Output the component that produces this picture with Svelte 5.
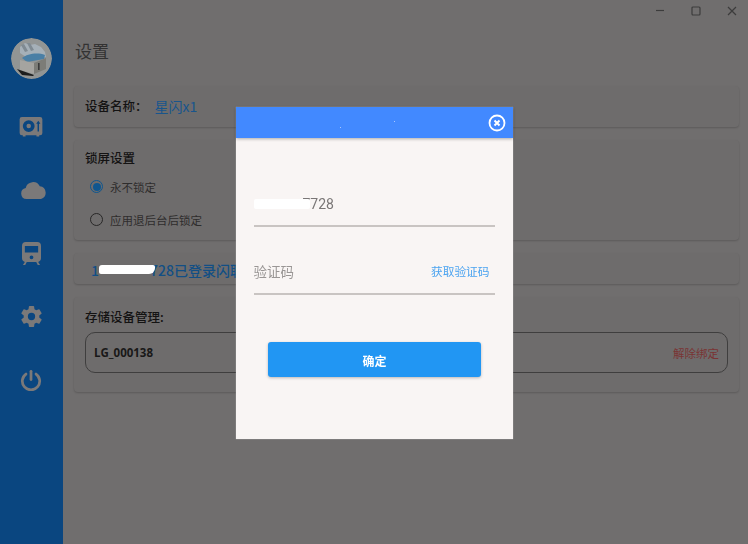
<script>
  let code = '';
  const navItems = ['disk', 'cloud', 'train', 'gear', 'power'];
</script>

<div class="window">
  <aside class="sidebar">
    <div class="avatar">
      <svg viewBox="0 0 41 41" width="41" height="41">
        <circle cx="20.500" cy="20.500" r="20.500" fill="#929594" />
        <path d="M9 9l5-4 5 2 5-1 6 3 4 5 1 5-17 2-9-6z" fill="#a5b0b8" />
        <path d="M10 7l3-1 4 7-3 1zM16 5l3 0 4 7-3 1z" fill="#7f8a92" />
        <path d="M11 20c5-4 15-6 23-3l-1 4-17 3z" fill="#4a7fa5" />
        <path d="M9 22l14 3v11l-14-4z" fill="#a5a4a0" />
        <path d="M23 25l12-5v11l-12 5z" fill="#7c7c77" />
        <path d="M6 31l17 6-1 1-11-1z" fill="#1d1d1d" />
        <rect x="27" y="25" width="1.600" height="7" fill="#3a3a3a" />
      </svg>
    </div>
    <nav class="nav">
      {#each navItems as item}
        <div class="nav-item">
          {#if item === 'disk'}
            <svg viewBox="0 0 26 22" width="24" height="20" fill="#7b7979">
              <path fill-rule="evenodd" d="M3 0h20a2.500 2.500 0 0 1 2.500 2.500v15A2.500 2.500 0 0 1 23 20h-1v1.500h-3V20H7v1.500H4V20H3a2.500 2.500 0 0 1-2.500-2.500v-15A2.500 2.500 0 0 1 3 0zm7.500 3.500a6.500 6.500 0 1 0 0 13 6.500 6.500 0 0 0 0-13zm0 4a2.500 2.500 0 1 1 0 5 2.500 2.500 0 0 1 0-5zM21 4l-2.300 3.500h1.500V16h1.600V7.500h1.500z" />
            </svg>
          {:else if item === 'cloud'}
            <svg class="cloud" viewBox="0 0 26 18" width="26" height="18" fill="#7b7979">
              <path d="M5.500 18A5.500 5.500 0 0 1 4.700 7.100 7.500 7.500 0 0 1 18.800 5.300 6.500 6.500 0 0 1 20 18z" />
            </svg>
          {:else if item === 'train'}
            <svg viewBox="0 0 20 24" width="19" height="23" fill="#7b7979">
              <path fill-rule="evenodd" d="M4 0h12a4 4 0 0 1 4 4v13a4 4 0 0 1-3 3.900l2 3.100h-2.400L15 21H5l-1.600 3H1l2-3.100A4 4 0 0 1 0 17V4a4 4 0 0 1 4-4zM3 4v7h14V4zm7 10a2 2 0 1 0 0 4 2 2 0 0 0 0-4z" />
            </svg>
          {:else if item === 'gear'}
            <svg viewBox="0 0 24 24" width="25" height="25" fill="#7b7979">
              <path d="M19.430 12.980a7.800 7.800 0 0 0 0-1.960l2.110-1.650a.5.500 0 0 0 .12-.64l-2-3.460a.5.500 0 0 0-.61-.22l-2.490 1a7.300 7.300 0 0 0-1.690-.98l-.38-2.650A.49.490 0 0 0 14 2h-4a.49.490 0 0 0-.49.420l-.38 2.650c-.61.25-1.170.59-1.690.98l-2.490-1a.49.490 0 0 0-.61.22l-2 3.460a.49.490 0 0 0 .12.640l2.110 1.650a7.900 7.900 0 0 0 0 1.960l-2.110 1.650a.5.500 0 0 0-.12.640l2 3.460c.12.220.39.300.61.220l2.490-1c.52.400 1.080.73 1.690.98l.38 2.650c.03.240.24.420.49.420h4c.25 0 .46-.18.49-.42l.38-2.650a7.700 7.700 0 0 0 1.690-.98l2.490 1c.23.090.49 0 .61-.22l2-3.460a.5.500 0 0 0-.12-.64zM12 15.500a3.500 3.500 0 1 1 0-7 3.500 3.500 0 0 1 0 7z" />
            </svg>
          {:else}
            <svg viewBox="0 0 24 24" width="22" height="22" fill="none" stroke="#7b7979" stroke-width="3" stroke-linecap="round">
              <path d="M12 2.500v9" />
              <path d="M6.500 5.500a9.500 9.500 0 1 0 11 0" />
            </svg>
          {/if}
        </div>
      {/each}
    </nav>
  </aside>

  <main class="content">
    <div class="titlebar">
      <svg viewBox="0 0 10 10" width="10" height="10" stroke="#3c3c3c" fill="none"><path d="M1 4.500h8" stroke-width="1.200" /></svg>
      <svg viewBox="0 0 10 10" width="10" height="10" stroke="#3c3c3c" fill="none"><rect x="1" y="1" width="8" height="8" rx="1" stroke-width="1.200" /></svg>
      <svg viewBox="0 0 10 10" width="10" height="10" stroke="#3c3c3c" fill="none"><path d="M1 1l8 8M9 1l-8 8" stroke-width="1.200" /></svg>
    </div>
    <h1 class="page-title">设置</h1>

    <section class="card name-card">
      <span class="label">设备名称：</span>
      <span class="device-name">星闪x1</span>
    </section>

    <section class="card lock-card">
      <div class="label">锁屏设置</div>
      <label class="radio-row">
        <span class="radio checked"></span>永不锁定
      </label>
      <label class="radio-row">
        <span class="radio"></span>应用退后台后锁定
      </label>
    </section>

    <section class="card login-card">
      1<span class="redact redact-login"></span>728已登录闪联
    </section>

    <section class="card storage-card">
      <div class="label">存储设备管理:</div>
      <div class="device-row">
        <span class="device-id">LG_000138</span>
        <span class="unbind">解除绑定</span>
      </div>
    </section>
  </main>

  <div class="scrim">
    <div class="dialog">
      <header class="dialog-head">
        <i class="speck speck-a"></i>
        <i class="speck speck-b"></i>
        <svg class="close" viewBox="0 0 18 18" width="18" height="18" fill="none" stroke="#fff">
          <circle cx="9" cy="9" r="7.500" stroke-width="1.800" />
          <path d="M6.500 6.500l5 5M11.500 6.500l-5 5" stroke-width="2" />
        </svg>
      </header>
      <div class="dialog-body">
        <div class="field phone">
          <span class="redact redact-phone"></span>7728
        </div>
        <div class="field code">
          <input class="code-input" placeholder="验证码" bind:value={code} />
          <span class="get-code">获取验证码</span>
        </div>
        <button class="confirm">确定</button>
      </div>
    </div>
  </div>
</div>

<style>
  :global(body) {
    margin: 0;
    background: #706e6e;
  }

  .window {
    display: flex;
    height: 544px;
    overflow: hidden;
    font-family: "Noto Sans CJK SC", "Noto Sans", sans-serif;
    font-size: 12px;
    color: #191818;
  }

  .sidebar {
    width: 63px;
    flex: none;
    background: #0a4680;
    display: flex;
    flex-direction: column;
    align-items: center;
    padding: 38px 1px 0 0;
    box-sizing: border-box;
  }

  .avatar {
    width: 41px;
    height: 41px;
    border-radius: 50%;
    overflow: hidden;
  }

  .nav {
    margin-top: 16px;
    display: flex;
    flex-direction: column;
    align-self: stretch;
  }

  .nav-item {
    height: 63.250px;
    display: flex;
    align-items: center;
    justify-content: center;
  }

  .cloud {
    margin-left: 5px;
  }

  .content {
    flex: 1;
    padding: 0 9px 0 11px;
    min-width: 0;
    background: #706e6e;
  }

  .titlebar {
    height: 22px;
    display: flex;
    justify-content: flex-end;
    align-items: center;
    gap: 26px;
    padding-right: 2px;
  }

  .page-title {
    margin: 16px 0 0 1px;
    font-size: 17px;
    font-weight: 400;
    line-height: 26px;
    height: 48px;
    color: #333232;
  }

  .card {
    background: #6e6c6c;
    border-radius: 4px;
    box-shadow: 0 1px 2px rgba(0, 0, 0, 0.18);
    box-sizing: border-box;
    margin-bottom: 13px;
    padding: 0 11px;
  }

  .label {
    font-size: 12.500px;
    font-weight: 500;
    color: #141313;
  }

  .name-card {
    height: 41px;
    padding-bottom: 2px;
    display: flex;
    align-items: center;
    gap: 1px;
  }

  .device-name {
    font-size: 14px;
    color: #18558c;
    margin-left: 6px;
  }

  .lock-card {
    height: 100px;
    padding-top: 8px;
  }

  .radio-row {
    display: flex;
    align-items: center;
    gap: 7px;
    height: 33px;
    padding-left: 5px;
    font-size: 11.500px;
    color: #2e2d2d;
  }

  .lock-card .radio-row:first-of-type {
    margin-top: 3px;
  }

  .radio {
    width: 11px;
    height: 11px;
    border: 1.500px solid #282727;
    border-radius: 50%;
    position: relative;
  }

  .radio.checked {
    border-color: #0f568f;
  }

  .radio.checked::after {
    content: "";
    position: absolute;
    inset: 1.500px;
    border-radius: 50%;
    background: #0f568f;
  }

  .login-card {
    height: 31px;
    display: flex;
    align-items: center;
    padding: 2px 0 0 17px;
    font-size: 14px;
    font-weight: 500;
    color: #124f85;
  }

  .redact {
    display: inline-block;
    background: #fff;
    position: relative;
    z-index: 20;
  }

  .redact-login {
    width: 56px;
    height: 9px;
    margin-right: -5px;
    border-radius: 3px 2px 6px 2px;
    filter: blur(0.5px);
  }

  .storage-card {
    height: 95px;
    padding-top: 10px;
  }

  .storage-card .label {
    line-height: 19px;
  }

  .device-row {
    margin-top: 6px;
    height: 41px;
    box-sizing: border-box;
    border: 1px solid #3f3e3e;
    border-radius: 10px;
    display: flex;
    justify-content: space-between;
    align-items: center;
    padding: 0 8px;
  }

  .device-id {
    font-family: "Open Sans", sans-serif;
    font-size: 11.500px;
    font-weight: 700;
    color: #191818;
  }

  .unbind {
    font-size: 11.500px;
    color: #7a3434;
  }

  .scrim {
    position: fixed;
    inset: 0;
    box-sizing: border-box;
    padding-top: 2px;
    display: flex;
    align-items: center;
    justify-content: center;
    z-index: 10;
  }

  .dialog {
    width: 277px;
    height: 332px;
    background: #f9f5f4;
    box-shadow: 0 0 1px rgba(255, 255, 255, 0.6);
    display: flex;
    flex-direction: column;
  }

  .dialog-head {
    height: 31px;
    flex: none;
    position: relative;
    background: #4289ff;
    box-shadow: 0 1px 3px rgba(0, 0, 0, 0.3);
    display: flex;
    justify-content: flex-end;
    align-items: center;
    padding-right: 7px;
  }

  .speck {
    position: absolute;
    width: 1px;
    height: 1px;
    background: #a9c8ff;
  }

  .speck-a {
    left: 104px;
    top: 20px;
  }

  .speck-b {
    left: 158px;
    top: 14px;
  }

  .dialog-body {
    flex: 1;
    display: flex;
    flex-direction: column;
    padding: 0 18px;
  }

  .field {
    height: 45px;
    box-sizing: border-box;
    border-bottom: 2px solid #c9c4c2;
    display: flex;
    align-items: center;
    font-family: "Roboto", "Noto Sans CJK SC", sans-serif;
    font-size: 14px;
    color: #7a7676;
  }

  .phone {
    margin-top: 44px;
    padding-top: 1px;
  }

  .redact-phone {
    width: 56px;
    height: 10px;
    margin-right: -7px;
    border-radius: 2px;
    filter: blur(0.5px);
  }

  .code {
    margin-top: 23px;
    padding: 0 5px 2px 0;
  }

  .code-input {
    flex: 1;
    min-width: 0;
    border: 0;
    outline: 0;
    padding: 0;
    background: transparent;
    font: inherit;
    font-family: "Noto Sans CJK SC", sans-serif;
    font-size: 13.500px;
    color: #757171;
  }

  .code-input::placeholder {
    color: #9a9695;
    opacity: 1;
  }

  .get-code {
    font-family: "Noto Sans CJK SC", sans-serif;
    font-size: 11.700px;
    color: #4aa3f0;
  }

  .confirm {
    margin: 47px 14px 0;
    height: 35px;
    flex: none;
    border: 0;
    border-radius: 3px;
    padding: 1px 0 0 1px;
    background: #2196f3;
    box-shadow: 0 1px 3px rgba(0, 0, 0, 0.25);
    color: #fff;
    font-family: "Noto Sans CJK SC", sans-serif;
    font-size: 12px;
    font-weight: 700;
  }
</style>
